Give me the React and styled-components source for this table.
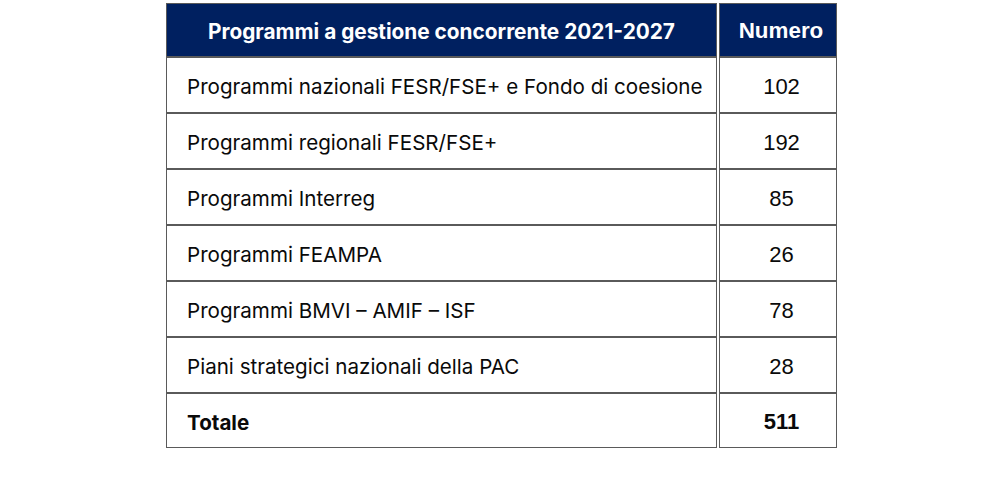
import styled, { createGlobalStyle } from "styled-components";

const GlobalStyle = createGlobalStyle`
  html, body {
    margin: 0;
    padding: 0;
    background: #ffffff;
  }
`;

const Page = styled.div`
  width: 1004px;
  height: 499px;
  padding: 3px 0 0 166px;
  box-sizing: border-box;
`;

const Table = styled.div`
  width: 671px;
  display: grid;
  grid-template-columns: 551px 118px;
  grid-template-rows: 54px repeat(6, 56px) 55px;
  column-gap: 2px;
`;

const HeadCell = styled.div`
  box-sizing: border-box;
  background: #002060;
  border: 1px solid #5a5a5a;
  color: #ffffff;
  display: flex;
  align-items: center;
  justify-content: center;
  padding-top: 2px;
  padding-left: ${(props) => (props.$num ? "6px" : "0")};
  font-family: ${(props) => props.$num ? '"Liberation Sans", Arial' : "Inter"}, sans-serif;
  font-weight: 700;
  font-size: ${(props) => (props.$num ? "22.4px" : "20.8px")};
  white-space: nowrap;
`;

const Cell = styled.div`
  box-sizing: border-box;
  border: 1px solid #5a5a5a;
  display: flex;
  align-items: center;
  justify-content: ${(props) => (props.$num ? "center" : "flex-start")};
  padding-top: 3px;
  padding-left: ${(props) => (props.$num ? "7px" : "20px")};
  color: #0a0a0a;
  font-family: ${(props) => props.$num ? '"Liberation Sans", Arial' : "Inter"}, sans-serif;
  font-weight: ${(props) => (props.$bold ? 700 : 400)};
  font-size: ${(props) => (props.$num ? "22px" : "20.6px")};
  white-space: nowrap;
`;

const rows = [
  ["Programmi nazionali FESR/FSE+ e Fondo di coesione", "102"],
  ["Programmi regionali FESR/FSE+", "192"],
  ["Programmi Interreg", "85"],
  ["Programmi FEAMPA", "26"],
  ["Programmi BMVI – AMIF – ISF", "78"],
  ["Piani strategici nazionali della PAC", "28"],
];

const App = () => {
  return (
    <Page>
      <GlobalStyle />
      <Table>
        <HeadCell>Programmi a gestione concorrente 2021-2027</HeadCell>
        <HeadCell $num>Numero</HeadCell>
        {rows.map(([label, value]) => [
          <Cell key={label}>{label}</Cell>,
          <Cell key={label + "-n"} $num>{value}</Cell>,
        ])}
        <Cell $bold>Totale</Cell>
        <Cell $num $bold>511</Cell>
      </Table>
    </Page>
  );
};

export default App;
